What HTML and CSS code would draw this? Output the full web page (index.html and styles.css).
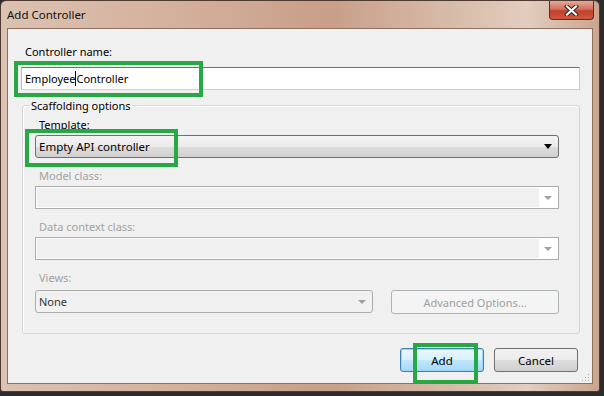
FILE: index.html
```html
<!DOCTYPE html>
<html lang="en">
<head>
    <meta charset="UTF-8">
    <title>Add Controller</title>
    <link rel="stylesheet" href="styles.css">
</head>
<body>
    <div class="window">
        <div class="titlebar">
            <span class="title">Add Controller</span>
            <button type="button" class="close">
                <svg width="17" height="11" viewBox="0 0 17 11">
                    <path d="M4 1.5 L13 9.5 M13 1.5 L4 9.5" stroke="#3a2620" stroke-width="4.2" stroke-linecap="square"/>
                    <path d="M4 1.5 L13 9.5 M13 1.5 L4 9.5" stroke="#fff" stroke-width="2.2" stroke-linecap="square"/>
                </svg>
            </button>
        </div>

        <div class="client">
            <label class="label" for="controllerName">Controller name:</label>
            <div class="textbox" id="controllerName">Employee<span class="caret"></span>Controller</div>

            <fieldset class="group">
                <legend>Scaffolding options</legend>
                <div class="group-body">
                    <div class="field">
                        <span class="label">Template:</span>
                        <div class="combo active">
                            <span class="combo-text">Empty API controller</span>
                            <span class="arrow"></span>
                        </div>
                    </div>
                    <div class="field">
                        <span class="label disabled">Model class:</span>
                        <div class="combo off">
                            <span class="combo-text"></span>
                            <span class="drop"><span class="arrow"></span></span>
                        </div>
                    </div>
                    <div class="field">
                        <span class="label disabled">Data context class:</span>
                        <div class="combo off">
                            <span class="combo-text"></span>
                            <span class="drop"><span class="arrow"></span></span>
                        </div>
                    </div>
                    <div class="field views">
                        <span class="label disabled">Views:</span>
                        <div class="views-row">
                            <div class="combo list">
                                <span class="combo-text">None</span>
                                <span class="arrow"></span>
                            </div>
                            <button type="button" class="btn advanced">Advanced Options...</button>
                        </div>
                    </div>
                </div>
            </fieldset>

            <div class="actions">
                <button type="button" class="btn primary">Add</button>
                <button type="button" class="btn">Cancel</button>
            </div>

            <svg class="grip" width="8" height="8" viewBox="0 0 8 8">
                <rect x="6" y="0" width="1" height="1" fill="#a8a8a8"/>
                <rect x="3" y="3" width="1" height="1" fill="#a8a8a8"/>
                <rect x="6" y="3" width="1" height="1" fill="#a8a8a8"/>
                <rect x="0" y="6" width="1" height="1" fill="#a8a8a8"/>
                <rect x="3" y="6" width="1" height="1" fill="#a8a8a8"/>
                <rect x="6" y="6" width="1" height="1" fill="#a8a8a8"/>
            </svg>
        </div>

        <!-- green highlight boxes -->
        <div class="mark mark-name"></div>
        <div class="mark mark-template"></div>
        <div class="mark mark-add"></div>
    </div>
</body>
</html>
```

FILE: styles.css
```css
body {
    margin: 0;
    background-color: #2c2c2e;
    font-family: "Noto Sans", "Open Sans", sans-serif;
    font-size: 11px;
    color: #000;
}
.window {
    position: relative;
    box-sizing: border-box;
    width: 600px;
    height: 392px;
    padding: 0 6px 6px;
    border: 1px solid #4e3a30;
    border-radius: 6px 6px 3px 3px;
    background: linear-gradient(to right, #dcc2b2 0%, #d3b09b 30%, #c89f88 55%, #d9bfae 78%, #e2cdbf 88%, #cba58f 100%);
}
.titlebar {
    display: flex;
    align-items: flex-start;
    height: 27px;
    margin: 0 -6px;
    padding: 0 5px 0 6px;
}
.title {
    line-height: 28px;
    font-size: 11.5px;
    color: #111;
}
.close {
    display: flex;
    align-items: center;
    justify-content: center;
    margin-left: auto;
    width: 45px;
    height: 19px;
    padding: 0;
    border: 1px solid #5c2a22;
    border-top: none;
    border-radius: 0 0 4px 4px;
    background: linear-gradient(to bottom, #e7a898 0%, #d27061 45%, #c2412d 55%, #cf5a3c 100%);
}
.client {
    position: relative;
    border: 1px solid #8e7060;
    background-color: #f0f0f0;
    padding: 15px 12px 11px 13px;
}
.label {
    display: block;
    line-height: 15px;
    padding-left: 4px;
}
.label.disabled {
    color: #a2a2a2;
}
.textbox {
    box-sizing: border-box;
    height: 23px;
    margin-top: 8px;
    padding: 0 3px;
    line-height: 21px;
    border: 1px solid;
    border-color: #3f7bab #b5cfe7 #b7d9ed #a4c9e3;
    background-color: #fff;
    white-space: nowrap;
}
.caret {
    display: inline-block;
    width: 0;
    height: 15px;
    border-left: 1px solid #000;
    vertical-align: -3px;
}
.group {
    margin: 8px 0 0 1px;
    padding: 0 20px 19px 7px;
    border: 1px solid #d5d5d5;
    border-radius: 3px;
    box-shadow: inset 1px 1px 0 #fff;
}
.group legend {
    padding: 0 1px;
    line-height: 15px;
}
.group-body {
    padding: 4px 0 0 5px;
}
.field {
    margin-bottom: 10px;
}
.field.views {
    margin-bottom: 0;
}
.field .label {
    margin-bottom: 3px;
}
.field.views .label {
    margin-bottom: 5px;
}
.combo {
    display: flex;
    align-items: center;
    box-sizing: border-box;
    height: 23px;
    border: 1px solid #acacac;
    border-radius: 3px;
}
.combo-text {
    flex: 1;
    padding-left: 3px;
    white-space: nowrap;
}
.arrow {
    width: 0;
    height: 0;
    border-left: 4px solid transparent;
    border-right: 4px solid transparent;
    border-top: 4px solid #a0a0a0;
    margin-right: 6px;
}
.combo.active {
    border-color: #707070;
    background: linear-gradient(to bottom, #f3f3f3 0%, #ebebeb 50%, #dddddd 51%, #d0d0d0 100%);
}
.combo.active .combo-text {
    font-size: 11.5px;
}
.combo.active .arrow {
    border-top-color: #000;
    border-left-width: 4px;
    border-right-width: 4px;
    border-top-width: 5px;
}
.combo.off {
    border-radius: 0;
    background-color: #fff;
    padding: 1px;
}
.combo.off .combo-text {
    align-self: stretch;
    background-color: #f0f0f0;
}
.drop {
    display: flex;
    align-items: center;
    justify-content: center;
    width: 18px;
}
.drop .arrow {
    margin-right: 0;
}
.views-row {
    display: flex;
    align-items: flex-start;
    gap: 18px;
}
.combo.list {
    width: 338px;
    background-color: #f1f1f1;
    color: #333;
    flex-shrink: 0;
}
.btn {
    box-sizing: border-box;
    height: 24px;
    padding: 0;
    font-family: inherit;
    font-size: 11.5px;
    border: 1px solid #707070;
    border-radius: 3px;
    background: linear-gradient(to bottom, #f2f2f2 0%, #ebebeb 50%, #dddddd 51%, #cfcfcf 100%);
    color: #000;
}
.btn.advanced {
    flex: 1;
    font-size: 11px;
    border-color: #adb2b5;
    background: #f4f4f4;
    color: #a0a0a0;
}
.actions {
    display: flex;
    justify-content: flex-end;
    gap: 10px;
    margin: 14px 2px 0 0;
}
.actions .btn {
    width: 84px;
}
.btn.primary {
    border-color: #3c7fb1;
    background: linear-gradient(to bottom, #eaf6fd 0%, #d9f0fc 50%, #bee6fd 51%, #a7d9f5 100%);
    box-shadow: inset 0 0 0 1px #9cd6f7;
}
.grip {
    position: absolute;
    right: 2px;
    bottom: 1px;
}
.mark {
    position: absolute;
    box-sizing: border-box;
    border: 4px solid #27a844;
}
.mark-name {
    left: 13px;
    top: 60px;
    width: 189px;
    height: 36px;
}
.mark-template {
    left: 24px;
    top: 128px;
    width: 153px;
    height: 38px;
}
.mark-add {
    left: 412px;
    top: 342px;
    width: 65px;
    height: 41px;
}
```
